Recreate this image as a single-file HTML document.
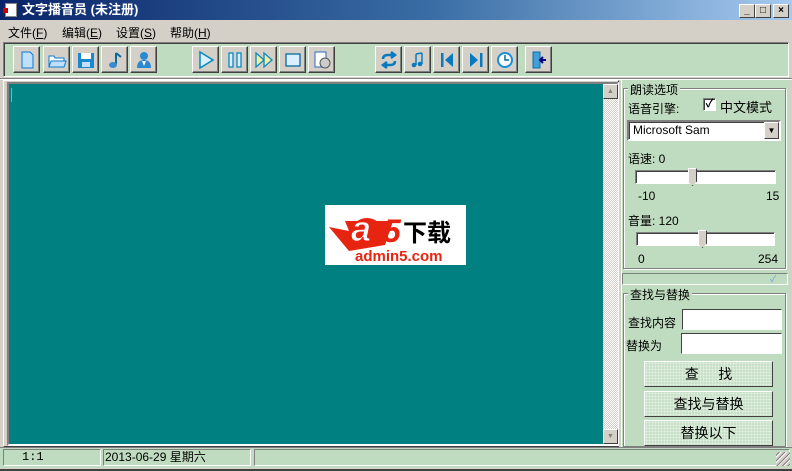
<!DOCTYPE html>
<html><head><meta charset="utf-8"><style>
*{margin:0;padding:0;box-sizing:border-box}
body{width:792px;height:471px;background:#d4d0c8;position:relative;overflow:hidden;font-family:"Liberation Sans","Noto Sans CJK SC","WenQuanYi Zen Hei",sans-serif;font-size:12px;color:#000}
.a{position:absolute}
.title{left:0;top:0;width:792px;height:20px;background:linear-gradient(90deg,#0a246a,#3a6ea5 55%,#a6caf0);color:#fff;font-weight:bold;font-size:13px;line-height:20px;padding-left:22px}
.wb{top:4px;width:16px;height:14px;background:#d4d0c8;border:1px solid;border-color:#fff #404040 #404040 #fff;font-size:10px;line-height:12px;text-align:center;color:#000;font-weight:bold}
.menu span{position:absolute;top:24px;font-size:12px}
.tb{left:3px;top:42px;width:786px;height:35px;background:#c0dcc0;border:1px solid;border-color:#808080 #fff #fff #808080;box-shadow:inset 1px 1px 0 #404040}
.btn{position:absolute;top:46px;width:27px;height:27px;background:#d4d0c8;border:1px solid;border-color:#fff #404040 #404040 #fff;box-shadow:inset -1px -1px 0 #808080}
.btn svg{position:absolute;left:3px;top:3px}
.rb{background:#d4d0c8;border:1px solid;border-color:#fff #404040 #404040 #fff}
.grp{border:1px solid #808080;box-shadow:1px 1px 0 #fff,inset 1px 1px 0 #fff}
.lg{position:absolute;background:#c0dcc0;padding:0 2px;font-size:12px}
.gb{position:absolute;background:#c8e0c8;border:1px solid;border-color:#fff #404040 #404040 #fff;text-align:center;line-height:24px;font-size:14px;background-image:radial-gradient(#e4f0e4 1px,transparent 1px);background-size:3px 3px}
</style></head><body>
<div class="a title">文字播音员 (未注册)</div>
<div class="a" style="left:5px;top:3px;width:12px;height:14px;background:#fff;border:1px solid #888"><div style="position:absolute;left:-3px;top:4px;width:5px;height:5px;background:#c00"></div></div>
<div class="a wb" style="left:739px">_</div>
<div class="a wb" style="left:755px">□</div>
<div class="a wb" style="left:773px">×</div>
<div class="menu"><span style="left:8px">文件(<u>F</u>)</span><span style="left:62px">编辑(<u>E</u>)</span><span style="left:116px">设置(<u>S</u>)</span><span style="left:170px">帮助(<u>H</u>)</span></div>
<div class="a tb"></div>
<div class="btn" style="left:13px"><svg width="20" height="20"><path d="M5 2h8l3 3v13H5z" fill="#bfe0ff" stroke="#0a7ad0"/></svg></div>
<div class="btn" style="left:43px"><svg width="20" height="20"><path d="M2 6h5l1 2h9v9H2z" fill="#fff" stroke="#0a7ad0"/><path d="M4 11h15l-2 6H2z" fill="#bfe0ff" stroke="#0a7ad0"/></svg></div>
<div class="btn" style="left:72px"><svg width="20" height="20"><rect x="2" y="3" width="16" height="15" fill="#1a88d0"/><rect x="5" y="3" width="10" height="6" fill="#fff"/><rect x="6" y="12" width="8" height="5" fill="#bfe0ff"/></svg></div>
<div class="btn" style="left:101px"><svg width="20" height="20"><path d="M11 3v11" stroke="#0a6aa0" stroke-width="2"/><ellipse cx="8" cy="15" rx="4" ry="3" fill="#3a8ad0"/><path d="M11 3l5 4" stroke="#0a6aa0" stroke-width="2"/></svg></div>
<div class="btn" style="left:130px"><svg width="20" height="20"><circle cx="10" cy="6" r="4" fill="#2a8ad0"/><path d="M3 18q0-8 7-8q7 0 7 8z" fill="#2a8ad0"/><path d="M8 11l2 5 2-5" fill="#fff"/></svg></div>
<div class="btn" style="left:192px"><svg width="20" height="20"><path d="M4 2l13 8-13 8z" fill="#d8f0ff" stroke="#0a88c0" stroke-width="1.5"/></svg></div>
<div class="btn" style="left:221px"><svg width="20" height="20"><rect x="4" y="3" width="4" height="14" fill="#d8f0ff" stroke="#0a88c0" stroke-width="1.3"/><rect x="12" y="3" width="4" height="14" fill="#d8f0ff" stroke="#0a88c0" stroke-width="1.3"/></svg></div>
<div class="btn" style="left:250px"><svg width="20" height="20"><path d="M2 3l8 7-8 7zM10 3l8 7-8 7z" fill="#f0f0a0" stroke="#0a88c0" stroke-width="1.3"/></svg></div>
<div class="btn" style="left:279px"><svg width="20" height="20"><rect x="3" y="4" width="14" height="12" fill="#d8f0ff" stroke="#0a6aa0" stroke-width="1.3"/></svg></div>
<div class="btn" style="left:308px"><svg width="20" height="20"><rect x="3" y="2" width="11" height="15" fill="#fff" stroke="#2a6ac0"/><circle cx="13" cy="13" r="5" fill="#ccc" stroke="#555"/></svg></div>
<div class="btn" style="left:375px"><svg width="20" height="20"><path d="M4 9q0-4 5-4h5M12 2l4 3-4 3M16 11q0 4-5 4H6M8 12l-4 3 4 3" fill="none" stroke="#0a7ac0" stroke-width="2.5"/></svg></div>
<div class="btn" style="left:404px"><svg width="20" height="20"><path d="M8 4v11M14 3v11M8 4l6-1" stroke="#0a7ac0" stroke-width="1.5" fill="none"/><circle cx="6" cy="15" r="2.3" fill="#0a7ac0"/><circle cx="12" cy="14" r="2.3" fill="#0a7ac0"/></svg></div>
<div class="btn" style="left:433px"><svg width="20" height="20"><rect x="4" y="3" width="2.5" height="14" fill="#0a7ac0"/><path d="M16 3v14L8 10z" fill="#0a7ac0"/></svg></div>
<div class="btn" style="left:462px"><svg width="20" height="20"><rect x="14" y="3" width="2.5" height="14" fill="#0a7ac0"/><path d="M4 3v14l8-7z" fill="#0a7ac0"/></svg></div>
<div class="btn" style="left:491px"><svg width="20" height="20"><circle cx="10" cy="10" r="7" fill="#fff" stroke="#1a90d8" stroke-width="2"/><path d="M10 5v5h4" stroke="#0a6aa0" stroke-width="1.5" fill="none"/></svg></div>
<div class="btn" style="left:525px"><svg width="20" height="20"><path d="M4 2h7v16H4z" fill="#40a0d8" stroke="#0a6aa0"/><path d="M17 10h-5M14 7l-3 3 3 3" stroke="#000080" stroke-width="2" fill="none"/></svg></div>
<div class="a" style="left:0;top:78px;width:792px;height:2px;border-top:1px solid #808080;border-bottom:1px solid #fff"></div>
<div class="a" style="left:3px;top:80px;width:616px;height:367px;border:1px solid;border-color:#fff #404040 #404040 #fff"></div>
<div class="a" style="left:7px;top:82px;width:612px;height:364px;border:2px solid;border-color:#808080 #fff #fff #808080;box-shadow:inset 1px 1px 0 #404040"></div>
<div class="a" style="left:9px;top:84px;width:594px;height:360px;background:#008080"></div>
<div class="a" style="left:11px;top:88px;width:1px;height:14px;background:#d09090"></div>
<div class="a" style="left:603px;top:84px;width:15px;height:360px;background:repeating-conic-gradient(#fff 0 25%,#d4d0c8 0 50%) 0 0/2px 2px"></div>
<div class="a rb" style="left:603px;top:84px;width:15px;height:15px;font-size:7px;color:#808080;text-align:center;line-height:13px">▲</div>
<div class="a rb" style="left:603px;top:429px;width:15px;height:15px;font-size:7px;color:#808080;text-align:center;line-height:13px">▼</div>
<div class="a" style="left:325px;top:205px;width:141px;height:60px;background:#fff">
<svg width="141" height="60"><path d="M4 22l20 4-4-10h48l-8 24-36 6z" fill="#e62410"/><ellipse cx="42" cy="24" rx="14" ry="11" fill="#e62410"/><text x="26" y="36" font-family="Liberation Sans" font-weight="bold" font-style="italic" font-size="36" fill="#fff" stroke="#e62410" stroke-width="1">a</text><text x="58" y="37" font-family="Liberation Sans" font-weight="bold" font-style="italic" font-size="32" fill="#e62410">5</text><text x="78" y="36" font-family="Noto Sans CJK SC,sans-serif" font-weight="bold" font-size="24" fill="#000">下载</text><text x="30" y="56" font-family="Liberation Sans" font-weight="bold" font-size="15" fill="#e62410">admin5.com</text></svg></div>
<div class="a" style="left:621px;top:80px;width:169px;height:367px;background:#c0dcc0;border-left:1px solid #fff"></div>
<div class="a grp" style="left:623px;top:88px;width:163px;height:181px"></div>
<div class="lg" style="left:628px;top:81px">朗读选项</div>
<div class="a" style="left:628px;top:100px">语音引擎:</div>
<div class="a" style="left:703px;top:98px;width:13px;height:13px;background:#fff;border:1px solid;border-color:#808080 #fff #fff #808080;box-shadow:inset 1px 1px 0 #404040;font-size:11px;line-height:11px;text-align:center;font-weight:bold">✓</div>
<div class="a" style="left:720px;top:97px;font-size:13px">中文模式</div>
<div class="a" style="left:627px;top:120px;width:154px;height:21px;background:#fff;border:2px solid;border-color:#808080 #fff #fff #808080;box-shadow:inset 1px 1px 0 #404040;padding-left:4px;line-height:17px;font-size:12px">Microsoft Sam</div>
<div class="a rb" style="left:764px;top:122px;width:15px;height:17px;font-size:8px;text-align:center;line-height:15px">▼</div>
<div class="a" style="left:628px;top:150px">语速: 0</div>
<div class="a" style="left:635px;top:170px;width:141px;height:14px;background:#fff;border:1px solid;border-color:#808080 #fff #fff #808080;box-shadow:inset 1px 1px 0 #404040"></div>
<div class="a" style="left:688px;top:168px;width:9px;height:18px;background:#d4d0c8;border:1px solid;border-color:#fff #404040 #404040 #fff;clip-path:polygon(0 0,100% 0,100% 75%,50% 100%,0 75%)"></div>
<div class="a" style="left:638px;top:189px">-10</div>
<div class="a" style="left:766px;top:189px">15</div>
<div class="a" style="left:628px;top:212px">音量: 120</div>
<div class="a" style="left:636px;top:232px;width:139px;height:14px;background:#fff;border:1px solid;border-color:#808080 #fff #fff #808080;box-shadow:inset 1px 1px 0 #404040"></div>
<div class="a" style="left:698px;top:230px;width:9px;height:18px;background:#d4d0c8;border:1px solid;border-color:#fff #404040 #404040 #fff;clip-path:polygon(0 0,100% 0,100% 75%,50% 100%,0 75%)"></div>
<div class="a" style="left:638px;top:252px">0</div>
<div class="a" style="left:758px;top:252px">254</div>
<div class="a" style="left:622px;top:273px;width:166px;height:12px;border:1px solid;border-color:#808080 #fff #fff #808080"></div>
<div class="a" style="left:770px;top:272px;font-size:9px;color:#6aa0d8">✓</div>
<div class="a grp" style="left:623px;top:293px;width:163px;height:154px"></div>
<div class="lg" style="left:628px;top:286px">查找与替换</div>
<div class="a" style="left:628px;top:314px">查找内容</div>
<div class="a" style="left:682px;top:309px;width:100px;height:21px;background:#fff;border:1px solid;border-color:#404040 #fff #fff #404040"></div>
<div class="a" style="left:626px;top:337px">替换为</div>
<div class="a" style="left:681px;top:333px;width:101px;height:21px;background:#fff;border:1px solid;border-color:#404040 #fff #fff #404040"></div>
<div class="gb" style="left:644px;top:361px;width:129px;height:26px">查&nbsp;&nbsp;&nbsp;&nbsp;&nbsp;找</div>
<div class="gb" style="left:644px;top:391px;width:129px;height:26px">查找与替换</div>
<div class="gb" style="left:644px;top:420px;width:129px;height:26px">替换以下</div>
<div class="a" style="left:0;top:447px;width:792px;height:21px;background:#c0dcc0;border-top:1px solid #808080"></div>
<div class="a" style="left:3px;top:449px;width:98px;height:17px;border:1px solid;border-color:#808080 #fff #fff #808080;padding-left:18px;line-height:15px;font-family:'Liberation Mono',monospace">1:1</div>
<div class="a" style="left:103px;top:449px;width:148px;height:17px;border:1px solid;border-color:#808080 #fff #fff #808080;padding-left:1px;line-height:15px">2013-06-29 星期六</div>
<div class="a" style="left:254px;top:449px;width:536px;height:17px;border:1px solid;border-color:#808080 #fff #fff #808080"></div>
<div class="a" style="left:776px;top:452px;width:14px;height:14px;background:repeating-linear-gradient(135deg,#d4d0c8 0 2px,#808080 2px 3px,#fff 3px 4px)"></div>
<div class="a" style="left:0;top:468px;width:792px;height:3px;background:#404040;border-top:1px solid #d4d0c8"></div>
</body></html>
